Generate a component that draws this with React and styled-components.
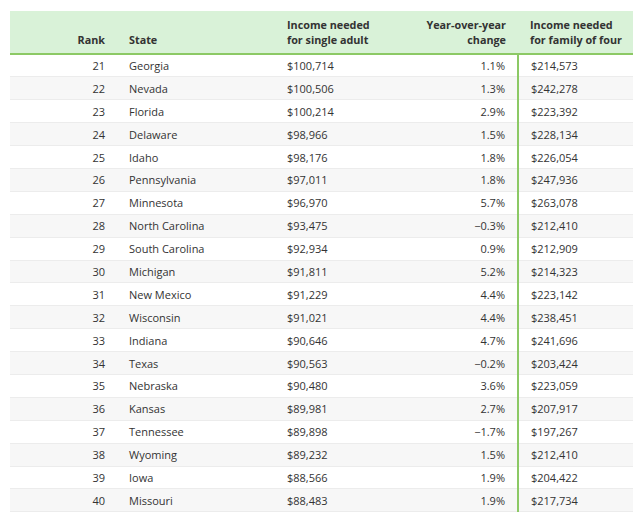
import React from "react";
import styled, { createGlobalStyle } from "styled-components";

const rows = [
  [21, "Georgia", "$100,714", "1.1%", "$214,573"],
  [22, "Nevada", "$100,506", "1.3%", "$242,278"],
  [23, "Florida", "$100,214", "2.9%", "$223,392"],
  [24, "Delaware", "$98,966", "1.5%", "$228,134"],
  [25, "Idaho", "$98,176", "1.8%", "$226,054"],
  [26, "Pennsylvania", "$97,011", "1.8%", "$247,936"],
  [27, "Minnesota", "$96,970", "5.7%", "$263,078"],
  [28, "North Carolina", "$93,475", "\u22120.3%", "$212,410"],
  [29, "South Carolina", "$92,934", "0.9%", "$212,909"],
  [30, "Michigan", "$91,811", "5.2%", "$214,323"],
  [31, "New Mexico", "$91,229", "4.4%", "$223,142"],
  [32, "Wisconsin", "$91,021", "4.4%", "$238,451"],
  [33, "Indiana", "$90,646", "4.7%", "$241,696"],
  [34, "Texas", "$90,563", "\u22120.2%", "$203,424"],
  [35, "Nebraska", "$90,480", "3.6%", "$223,059"],
  [36, "Kansas", "$89,981", "2.7%", "$207,917"],
  [37, "Tennessee", "$89,898", "\u22121.7%", "$197,267"],
  [38, "Wyoming", "$89,232", "1.5%", "$212,410"],
  [39, "Iowa", "$88,566", "1.9%", "$204,422"],
  [40, "Missouri", "$88,483", "1.9%", "$217,734"],
];

const GlobalStyle = createGlobalStyle`
  body {
    margin: 0;
    background: #ffffff;
    font-family: "Open Sans", "Liberation Sans", sans-serif;
  }
`;

const Page = styled.div`
  padding: 11px 7px 0 10px;
`;

const Table = styled.table`
  width: 623px;
  border-collapse: collapse;
  table-layout: fixed;
  color: #333333;
`;

const HeadCell = styled.th`
  padding: 6px 12px 6px;
  background: #d9f2d8;
  border-bottom: 2px solid #8cc965;
  font-size: 10.8px;
  font-weight: 700;
  line-height: 15px;
  white-space: nowrap;
  vertical-align: bottom;
  text-align: ${(p) => (p.$right ? "right" : "left")};
`;

const Row = styled.tr`
  height: 22.9px;
  background: ${(p) => (p.$shaded ? "#f7f7f7" : "#ffffff")};
  border-bottom: 1px solid #ececec;
`;

const Cell = styled.td`
  padding: 0 12px;
  font-size: 11px;
  line-height: 15px;
  text-align: ${(p) => (p.$right ? "right" : "left")};
  border-right: ${(p) => (p.$divider ? "2px solid #8cc965" : "none")};
`;

export default function App() {
  return (
    <Page>
      <GlobalStyle />
      <Table>
        <colgroup>
          <col style={{ width: 107 }} />
          <col style={{ width: 158 }} />
          <col style={{ width: 121 }} />
          <col style={{ width: 122 }} />
          <col />
        </colgroup>
        <thead>
          <tr>
            <HeadCell $right>Rank</HeadCell>
            <HeadCell>State</HeadCell>
            <HeadCell>
              Income needed
              <br />
              for single adult
            </HeadCell>
            <HeadCell $right>
              Year-over-year
              <br />
              change
            </HeadCell>
            <HeadCell>
              Income needed
              <br />
              for family of four
            </HeadCell>
          </tr>
        </thead>
        <tbody>
          {rows.map(([rank, state, single, change, family], i) => (
            <Row key={rank} $shaded={i % 2 === 1}>
              <Cell $right>{rank}</Cell>
              <Cell>{state}</Cell>
              <Cell>{single}</Cell>
              <Cell $right $divider>
                {change}
              </Cell>
              <Cell>{family}</Cell>
            </Row>
          ))}
        </tbody>
      </Table>
    </Page>
  );
}
